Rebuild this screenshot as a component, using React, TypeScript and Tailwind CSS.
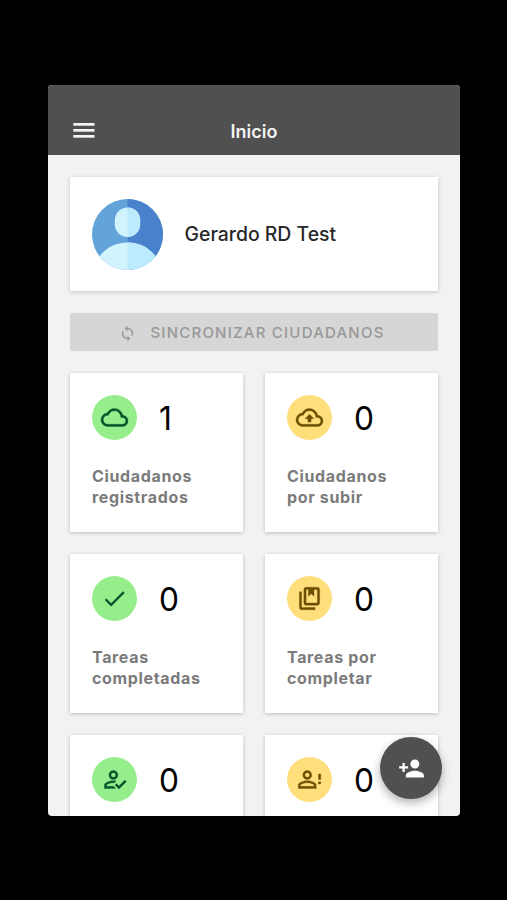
import React from "react";
import { MdCheck, MdPersonAdd, MdSync } from "react-icons/md";

const Glyph = ({ d }: { d: string }) => (
  <svg
    viewBox="0 0 24 24"
    className="size-[27px] overflow-visible"
    fill="currentColor"
    stroke="currentColor"
    strokeWidth="0.3"
  >
    <path d={d} />
  </svg>
);

const cloud =
  "M19.35 10.04A7.49 7.49 0 0 0 12 4C9.11 4 6.6 5.64 5.35 8.04A5.994 5.994 0 0 0 0 14c0 3.31 2.69 6 6 6h13c2.76 0 5-2.24 5-5 0-2.64-2.05-4.78-4.65-4.96zM19 18H6c-2.21 0-4-1.790-4-4 0-2.050 1.530-3.760 3.560-3.970l1.070-.110.5-.950A5.469 5.469 0 0 1 12 6c2.620 0 4.880 1.860 5.390 4.430l.3 1.500 1.530.110A2.980 2.980 0 0 1 22 15c0 1.650-1.350 3-3 3z";
const cloudUpload = cloud + "M8 13h2.55v3h2.9v-3H16l-4-4z";
const books =
  "M19 2a2 2 0 0 1 2 2v12a2 2 0 0 1-2 2H9a2 2 0 0 1-2-2V4a2 2 0 0 1 2-2h10m0 2h-3v6l-2.5-2.25L11 10V4H9v12h10V4M3 20a2 2 0 0 0 2 2h12v-2H5V6H3v14z";
const accountCheck =
  "M21.1 12.5l1.4 1.41-6.53 6.59L12.5 17l1.4-1.41 2.07 2.08 5.13-5.17M11 4a4 4 0 1 1 0 8 4 4 0 0 1 0-8m0 1.9A2.1 2.1 0 0 0 8.9 8a2.1 2.1 0 1 0 4.2 0A2.1 2.1 0 0 0 11 5.9M11 13c.68 0 1.5.09 2.41.26l-1.67 1.67L11 14.9c-2.97 0-6.1 1.46-6.1 2.1v1.1h6.2L13 20H3v-3c0-2.66 5.33-4 8-4z";
const accountAlert =
  "M20 12V7h2v5h-2m0 4h2v-2h-2v2m-10-3c2.67 0 8 1.34 8 4v3H2v-3c0-2.66 5.33-4 8-4m0-9a4 4 0 1 1 0 8 4 4 0 0 1 0-8m0 10.9c-2.97 0-6.1 1.46-6.1 2.1v1.1h12.2V17c0-.64-3.13-2.1-6.1-2.1m0-9A2.1 2.1 0 0 0 7.9 8a2.1 2.1 0 1 0 4.2 0A2.1 2.1 0 0 0 10 5.9z";

type StatProps = {
  icon: React.ReactNode;
  value: number;
  lines?: string[];
  pending?: boolean;
};

const StatCard = ({ icon, value, lines = [], pending }: StatProps) => (
  <div className="h-[159px] bg-white px-[22px] pt-[22px] shadow-[0_1px_4px_rgba(0,0,0,0.22)]">
    <div className="flex items-center gap-[22px]">
      <div
        className={
          pending
            ? "flex size-[45px] items-center justify-center rounded-full bg-[#ffde7c] text-[#6b5000]"
            : "flex size-[45px] items-center justify-center rounded-full bg-[#95ed8b] text-[#00552b]"
        }
      >
        {icon}
      </div>
      <span className="origin-left scale-x-[0.96] pt-[2px] text-[33px] leading-[43px] text-black">
        {value}
      </span>
    </div>
    <p className="mt-[25.5px] text-[16px] font-bold leading-[21.6px] tracking-[0.65px] whitespace-nowrap text-[#7b7b7b]">
      {lines.map((line) => (
        <span key={line} className="block">
          {line}
        </span>
      ))}
    </p>
  </div>
);

const Avatar = () => (
  <svg viewBox="0 0 70 70" className="size-[71px]">
    <defs>
      <clipPath id="avatar">
        <circle cx="35" cy="35" r="35" />
      </clipPath>
    </defs>
    <g clipPath="url(#avatar)">
      <rect width="70" height="70" fill="#62a4da" />
      <rect x="35" width="35" height="70" fill="#4a81cd" />
      <rect x="22.5" y="8.5" width="25" height="29" rx="12.5" fill="#d0f3fe" />
      <path d="M35 43C23 43 14 48 7 57V70H63V57C56 48 47 43 35 43Z" fill="#d0f3fe" />
      <path d="M35 8.500C42.500 8.500 47.500 14 47.500 21V25C47.500 32 42 37.500 35 37.500Z" fill="#bbebfc" />
      <path d="M35 43C47 43 56 48 63 57V70H35Z" fill="#bbebfc" />
    </g>
  </svg>
);

const App = () => {
  return (
    <div className="flex h-[900px] w-[507px] justify-center bg-black pt-[85px] pl-px font-[Inter,sans-serif]">
      <div className="relative h-[731px] w-[412px] overflow-hidden rounded-[4px] bg-[#f2f2f2]">
        <header className="grid h-[70px] grid-cols-[1fr_auto_1fr] items-end bg-[#505050] px-[22px] pb-[10px] text-white">
          <svg viewBox="0 0 28 28" className="size-[28px]" fill="#f4f4f4">
            <rect x="3.300" y="6" width="21.200" height="2.700" />
            <rect x="3.300" y="12" width="21.200" height="2.700" />
            <rect x="3.300" y="18" width="21.200" height="2.700" />
          </svg>
          <h1 className="text-[18px] font-semibold leading-[27px] text-[#f4f4f4]">
            Inicio
          </h1>
        </header>

        <main className="flex flex-col gap-[22px] px-[22px] pt-[22px]">
          <section className="flex h-[114px] items-center gap-[21.5px] bg-white px-[22px] shadow-[0_1px_4px_rgba(0,0,0,0.2)]">
            <Avatar />
            <span className="pt-px text-[19.4px] font-medium text-[#282828]">
              Gerardo RD Test
            </span>
          </section>

          <button className="flex h-[38px] items-center justify-center gap-[14px] rounded-[2px] bg-[#d6d6d6] pt-[2px] pr-[4px] text-[15px] font-medium tracking-[1.22px] text-[#989898]">
            <MdSync className="size-[17px]" />
            SINCRONIZAR CIUDADANOS
          </button>

          <div className="grid grid-cols-2 gap-[22px]">
            <StatCard
              icon={<Glyph d={cloud} />}
              value={1}
              lines={["Ciudadanos", "registrados"]}
            />
            <StatCard
              pending
              icon={<Glyph d={cloudUpload} />}
              value={0}
              lines={["Ciudadanos", "por subir"]}
            />
            <StatCard
              icon={<MdCheck className="size-[27px]" />}
              value={0}
              lines={["Tareas", "completadas"]}
            />
            <StatCard
              pending
              icon={<Glyph d={books} />}
              value={0}
              lines={["Tareas por", "completar"]}
            />
            <StatCard icon={<Glyph d={accountCheck} />} value={0} />
            <StatCard pending icon={<Glyph d={accountAlert} />} value={0} />
          </div>
        </main>

        {/* Floating add button */}
        <button className="absolute right-[18px] bottom-[17px] flex size-[62px] items-center justify-center rounded-full bg-[#505050] text-white shadow-[0_4px_10px_rgba(0,0,0,0.3)]">
          <MdPersonAdd className="size-[27px]" />
        </button>
      </div>
    </div>
  );
};

export default App;
